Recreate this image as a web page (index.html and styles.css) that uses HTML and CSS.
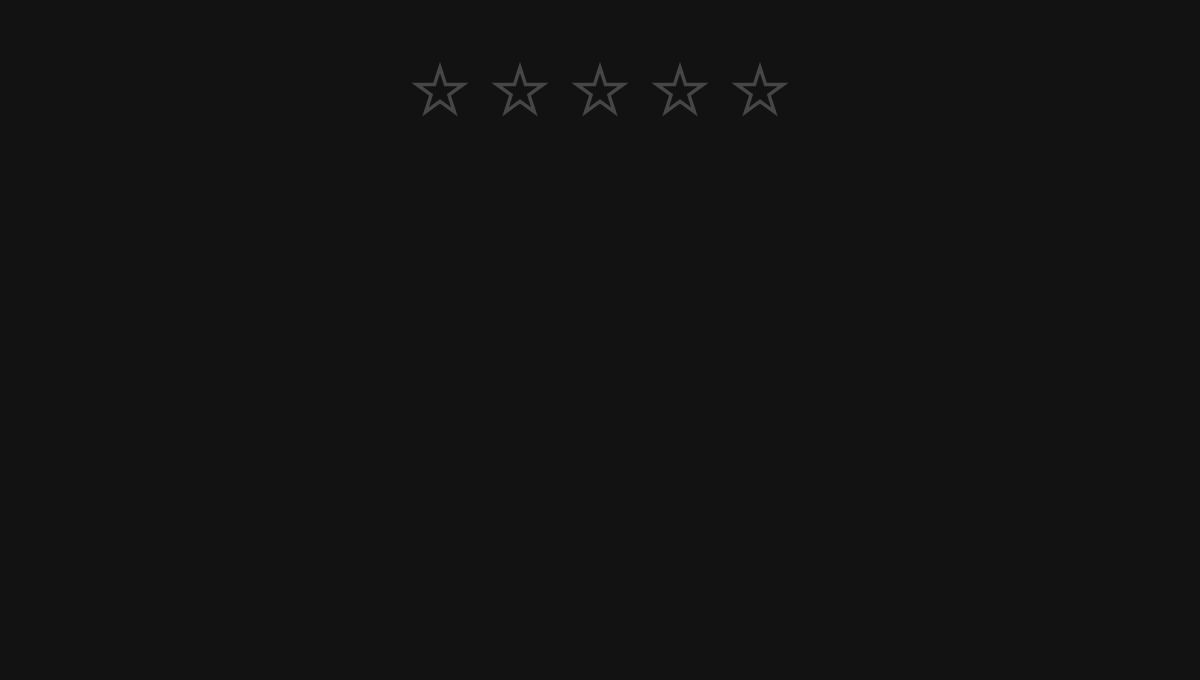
FILE: index.html
```html
<!DOCTYPE html>
<html lang="en">
<head>
<meta charset="utf-8">
<title>Rating</title>
<link rel="stylesheet" href="styles.css">
</head>
<body>
<div class="rating" role="radiogroup" aria-label="Rating">
  <button class="star" aria-label="1 star"><svg viewBox="0 0 60 60" width="60" height="60"><polygon points="30,6.5 35.5,23.43 53.3,23.43 38.9,33.89 44.4,50.82 30,40.36 15.6,50.82 21.1,33.89 6.7,23.43 24.5,23.43"/></svg></button>
  <button class="star" aria-label="2 stars"><svg viewBox="0 0 60 60" width="60" height="60"><polygon points="30,6.5 35.5,23.43 53.3,23.43 38.9,33.89 44.4,50.82 30,40.36 15.6,50.82 21.1,33.89 6.7,23.43 24.5,23.43"/></svg></button>
  <button class="star" aria-label="3 stars"><svg viewBox="0 0 60 60" width="60" height="60"><polygon points="30,6.5 35.5,23.43 53.3,23.43 38.9,33.89 44.4,50.82 30,40.36 15.6,50.82 21.1,33.89 6.7,23.43 24.5,23.43"/></svg></button>
  <button class="star" aria-label="4 stars"><svg viewBox="0 0 60 60" width="60" height="60"><polygon points="30,6.5 35.5,23.43 53.3,23.43 38.9,33.89 44.4,50.82 30,40.36 15.6,50.82 21.1,33.89 6.7,23.43 24.5,23.43"/></svg></button>
  <button class="star" aria-label="5 stars"><svg viewBox="0 0 60 60" width="60" height="60"><polygon points="30,6.5 35.5,23.43 53.3,23.43 38.9,33.89 44.4,50.82 30,40.36 15.6,50.82 21.1,33.89 6.7,23.43 24.5,23.43"/></svg></button>
</div>
</body>
</html>
```
FILE: styles.css
```css
html, body {
  margin: 0;
  padding: 0;
  height: 100%;
  background: #121212;
  font-family: "Liberation Sans", Arial, sans-serif;
}
.rating {
  display: flex;
  justify-content: center;
  gap: 20px;
  padding-top: 61px;
}
.star {
  display: block;
  width: 60px;
  height: 60px;
  padding: 0;
  margin: 0;
  border: 0;
  background: none;
  cursor: pointer;
}
.star svg {
  display: block;
}
.star polygon {
  fill: none;
  stroke: #464646;
  stroke-width: 3.5;
  stroke-linejoin: miter;
  stroke-miterlimit: 10;
}
```
